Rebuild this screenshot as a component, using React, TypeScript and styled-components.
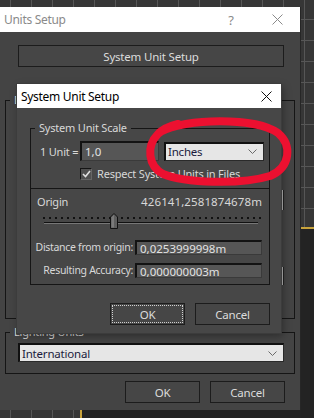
import React from 'react';
import styled, { createGlobalStyle } from 'styled-components';

const GlobalStyle = createGlobalStyle`
    html, body {
        margin: 0;
        padding: 0;
    }
    body {
        width: 314px;
        height: 418px;
        overflow: hidden;
        background: #303030;
        font-family: "Noto Sans", "DejaVu Sans", sans-serif;
        font-size: 11px;
        letter-spacing: -0.2px;
        color: #d8d8d8;
    }
    * {
        box-sizing: border-box;
    }
`;

const Page = styled.div`
    position: relative;
    width: 314px;
    height: 418px;
    overflow: hidden;
    padding-top: 7px;
    background-color: #363636;
    background-image:
        linear-gradient(#c8a33c, #c8a33c),
        linear-gradient(#232323, #232323),
        linear-gradient(#c8a33c, #c8a33c),
        linear-gradient(#242424, #242424),
        linear-gradient(90deg, #565656 1px, transparent 1px),
        linear-gradient(#565656 1px, transparent 1px);
    background-size: 13px 2px, 13px 200px, 2px 20px, 240px 20px, 21px 21px, 21px 21px;
    background-position: 301px 227px, 301px 229px, 80px 408px, 82px 408px, 10px 19px, 10px 19px;
    background-repeat: no-repeat, no-repeat, no-repeat, no-repeat, repeat, repeat;
`;

const Window = styled.div`
    width: 300px;
    background: #444444;
    box-shadow: 1px 0 0 #262626;
`;

const TitleBar = styled.div<{ $active?: boolean }>`
    display: flex;
    align-items: center;
    height: ${p => (p.$active ? 24 : 25)}px;
    background: #ffffff;
    color: ${p => (p.$active ? '#000000' : '#8a8a8a')};
    font-size: 12px;
    letter-spacing: -0.3px;
`;

const TitleText = styled.div`
    flex: 1;
    padding-left: 4px;
    white-space: nowrap;
`;

const TitleButton = styled.div<{ $w: number }>`
    display: flex;
    align-items: center;
    justify-content: center;
    width: ${p => p.$w}px;
    height: 100%;
    font-size: 13px;
`;

const WinBody = styled.div`
    display: flex;
    flex-direction: column;
    padding: 13px 0 7px;
`;

const Button = styled.button<{ $focused?: boolean }>`
    height: 22px;
    width: 75px;
    padding: 0;
    background: #464646;
    border: 1px solid #1c1c1c;
    color: #dcdcdc;
    font-family: inherit;
    font-size: 11.5px;
    letter-spacing: -0.2px;
    outline: ${p => (p.$focused ? '1px dotted #d0d0d0' : 'none')};
    outline-offset: -3px;
`;

const WideButton = styled(Button)`
    width: 266px;
    margin-left: 18px;
`;

const Group = styled.fieldset<{ $h: number }>`
    position: relative;
    height: ${p => p.$h}px;
    margin: 0;
    padding: 0;
    border: 1px solid #151515;
    min-inline-size: 0;
`;

const OuterGroup = styled(Group)<{ $top: number }>`
    margin: ${p => p.$top}px 5px 0 5px;
`;

const Legend = styled.legend`
    margin-left: 4px;
    padding: 0 4px;
    line-height: 14px;
    font-size: 11px;
    color: #d8d8d8;
`;

const Stubs = styled.div`
    display: flex;
    flex-direction: column;
    align-items: flex-end;
    padding-right: 11px;
`;

const Stub = styled.div<{ $top: number; $h: number }>`
    width: 2px;
    height: ${p => p.$h}px;
    margin-top: ${p => p.$top}px;
    background: #b8b8b8;
    box-shadow: 1px 0 0 #222;
`;

const Select = styled.div<{ $w?: number }>`
    display: flex;
    align-items: center;
    justify-content: space-between;
    width: ${p => (p.$w ? `${p.$w}px` : 'auto')};
    height: 19px;
    padding: 0 6px 0 2px;
    background: #e6e6e6;
    border: 1px solid #2a2a2a;
    border-top: 2px solid #111;
    border-left: 2px solid #111;
    color: #1b1b3c;
    font-size: 11.5px;
`;

const WideSelect = styled(Select)`
    margin: 4px 10px 0 12px;
`;

const Chevron = () => (
    <svg width="9" height="5" viewBox="0 0 9 5">
        <polyline points="0.5,0.5 4.5,4.5 8.5,0.5" fill="none" stroke="#6a6a6a" strokeWidth="1" />
    </svg>
);

const ButtonRow = styled.div<{ $top: number; $right: number }>`
    display: flex;
    justify-content: flex-end;
    gap: 10px;
    margin-top: ${p => p.$top}px;
    padding-right: ${p => p.$right}px;
`;

const Dialog = styled.div`
    position: absolute;
    left: 17px;
    top: 84px;
    width: 264px;
    height: 249px;
    display: flex;
    flex-direction: column;
    background: #474747;
    box-shadow: 0 0 0 1px #3c3c3c, 2px 3px 8px rgba(0, 0, 0, 0.35);
    z-index: 2;
`;

const DialogBody = styled.div`
    display: flex;
    flex-direction: column;
    padding: 13px 11px 0 13px;
`;

const UnitRow = styled.div`
    display: flex;
    align-items: center;
    margin-top: 6px;
    padding-left: 9px;
`;

const RowLabel = styled.span`
    width: 40px;
    white-space: nowrap;
`;

const TextField = styled.div<{ $w: number; $h: number }>`
    display: flex;
    align-items: center;
    width: ${p => p.$w}px;
    height: ${p => p.$h}px;
    padding-left: 3px;
    background: #565656;
    border-top: 2px solid #131313;
    border-left: 2px solid #131313;
    border-right: 1px solid #3a3a3a;
    border-bottom: 1px solid #3a3a3a;
    color: #e2e2e2;
    font-size: 11.5px;
    letter-spacing: 0;
    white-space: nowrap;
    overflow: hidden;
`;

const CheckRow = styled.label`
    display: flex;
    align-items: center;
    gap: 5px;
    margin-top: 5px;
    padding-left: 49px;
    white-space: nowrap;
`;

const CheckBox = styled.span`
    display: flex;
    align-items: center;
    justify-content: center;
    width: 12px;
    height: 12px;
    background: #505050;
    border-top: 1px solid #151515;
    border-left: 1px solid #151515;
    border-right: 1px solid #666;
    border-bottom: 1px solid #666;
`;

const OriginBox = styled.div`
    display: flex;
    flex-direction: column;
    margin-top: 7px;
    border-top: 1px solid #151515;
`;

const OriginHeader = styled.div`
    display: flex;
    justify-content: space-between;
    padding: 6px 7px 0 6px;
    line-height: 14px;
    white-space: nowrap;
`;

const OriginValue = styled.span`
    font-size: 11.5px;
    letter-spacing: 0.1px;
`;

const Slider = styled.div`
    position: relative;
    height: 18px;
    margin: 3px 7px 0 12px;
`;

const Dots = styled.div`
    height: 2px;
    margin-top: 5px;
    background: repeating-linear-gradient(90deg, #111 0 2px, transparent 2px 6px);
`;

const Track = styled.div`
    height: 2px;
    margin: 3px 4px 0 1px;
    border-top: 1px solid #111;
    border-bottom: 1px solid #777;
`;

const Thumb = styled.svg`
    position: absolute;
    left: 67px;
    top: 1px;
`;

const Fields = styled.div`
    display: grid;
    grid-template-columns: 98px 127px;
    column-gap: 2px;
    row-gap: 8px;
    margin-top: 10px;
    padding-left: 4px;
`;

const FieldLabel = styled.span`
    text-align: right;
    line-height: 15px;
    font-size: 10.5px;
    white-space: nowrap;
    letter-spacing: -0.3px;
`;

const Scribble = styled.svg`
    position: absolute;
    left: 0;
    top: 0;
    z-index: 3;
    pointer-events: none;
`;

const CloseGlyph = ({ color }: { color: string }) => (
    <svg width="11" height="11" viewBox="0 0 11 11">
        <path d="M0.5 0.5 L10.5 10.5 M10.5 0.5 L0.5 10.5" stroke={color} strokeWidth="1" />
    </svg>
);

const App: React.FC = () => {
    return (
        <Page>
            <GlobalStyle />
            <Window>
                <TitleBar>
                    <TitleText>Units Setup</TitleText>
                    <TitleButton $w={46}>?</TitleButton>
                    <TitleButton $w={46}>
                        <CloseGlyph color="#8a8a8a" />
                    </TitleButton>
                </TitleBar>
                <WinBody>
                    <WideButton>System Unit Setup</WideButton>
                    <OuterGroup $top={26} $h={226}>
                        <Legend>Display Unit Scale</Legend>
                        <Stubs>
                            <Stub $top={83} $h={20} />
                            <Stub $top={57} $h={18} />
                        </Stubs>
                    </OuterGroup>
                    <OuterGroup $top={6} $h={49}>
                        <Legend>Lighting Units</Legend>
                        <WideSelect>
                            International
                            <Chevron />
                        </WideSelect>
                    </OuterGroup>
                    <ButtonRow $top={7} $right={15}>
                        <Button>OK</Button>
                        <Button>Cancel</Button>
                    </ButtonRow>
                </WinBody>
            </Window>

            <Dialog>
                <TitleBar $active>
                    <TitleText>System Unit Setup</TitleText>
                    <TitleButton $w={30}>
                        <CloseGlyph color="#111111" />
                    </TitleButton>
                </TitleBar>
                <DialogBody>
                    <Group $h={164}>
                        <Legend>System Unit Scale</Legend>
                        <UnitRow>
                            <RowLabel>1 Unit =</RowLabel>
                            <TextField $w={79} $h={20}>1,0</TextField>
                            <Select $w={100} style={{ marginLeft: 5 }}>
                                Inches
                                <Chevron />
                            </Select>
                        </UnitRow>
                        <CheckRow>
                            <CheckBox>
                                <svg width="9" height="8" viewBox="0 0 9 8">
                                    <polyline points="1,4 3.5,6.5 8,1" fill="none" stroke="#e0e0e0" strokeWidth="1.6" />
                                </svg>
                            </CheckBox>
                            Respect System Units in Files
                        </CheckRow>
                        <OriginBox>
                            <OriginHeader>
                                <span>Origin</span>
                                <OriginValue>426141,2581874678m</OriginValue>
                            </OriginHeader>
                            <Slider>
                                <Dots />
                                <Track />
                                <Thumb width="8" height="16" viewBox="0 0 8 16">
                                    <path d="M0.5 4 L4 0.5 L7.5 4 L7.5 15.5 L0.5 15.5 Z" fill="#5e5e5e" stroke="#111" strokeWidth="1" />
                                    <path d="M1.5 4.3 L4 1.8 L4 14.5 L1.5 14.5 Z" fill="#7a7a7a" />
                                </Thumb>
                            </Slider>
                            <Fields>
                                <FieldLabel>Distance from origin:</FieldLabel>
                                <TextField $w={127} $h={15}>0,0253999998m</TextField>
                                <FieldLabel>Resulting Accuracy:</FieldLabel>
                                <TextField $w={127} $h={15}>0,000000003m</TextField>
                            </Fields>
                        </OriginBox>
                    </Group>
                    <ButtonRow $top={18} $right={-2}>
                        <Button $focused>OK</Button>
                        <Button>Cancel</Button>
                    </ButtonRow>
                </DialogBody>
            </Dialog>

            <Scribble width="314" height="418" viewBox="0 0 314 418">
                <path
                    d="M160 132 C 185 118, 255 117, 278 133 C 292 145, 291 167, 270 176 C 240 185, 185 183, 163 174 C 148 166, 146 146, 158 134 C 163 129, 170 126, 178 124"
                    fill="none"
                    stroke="#ec1030"
                    strokeWidth="8"
                    strokeLinecap="round"
                    strokeLinejoin="round"
                />
            </Scribble>
        </Page>
    );
};

export default App;
